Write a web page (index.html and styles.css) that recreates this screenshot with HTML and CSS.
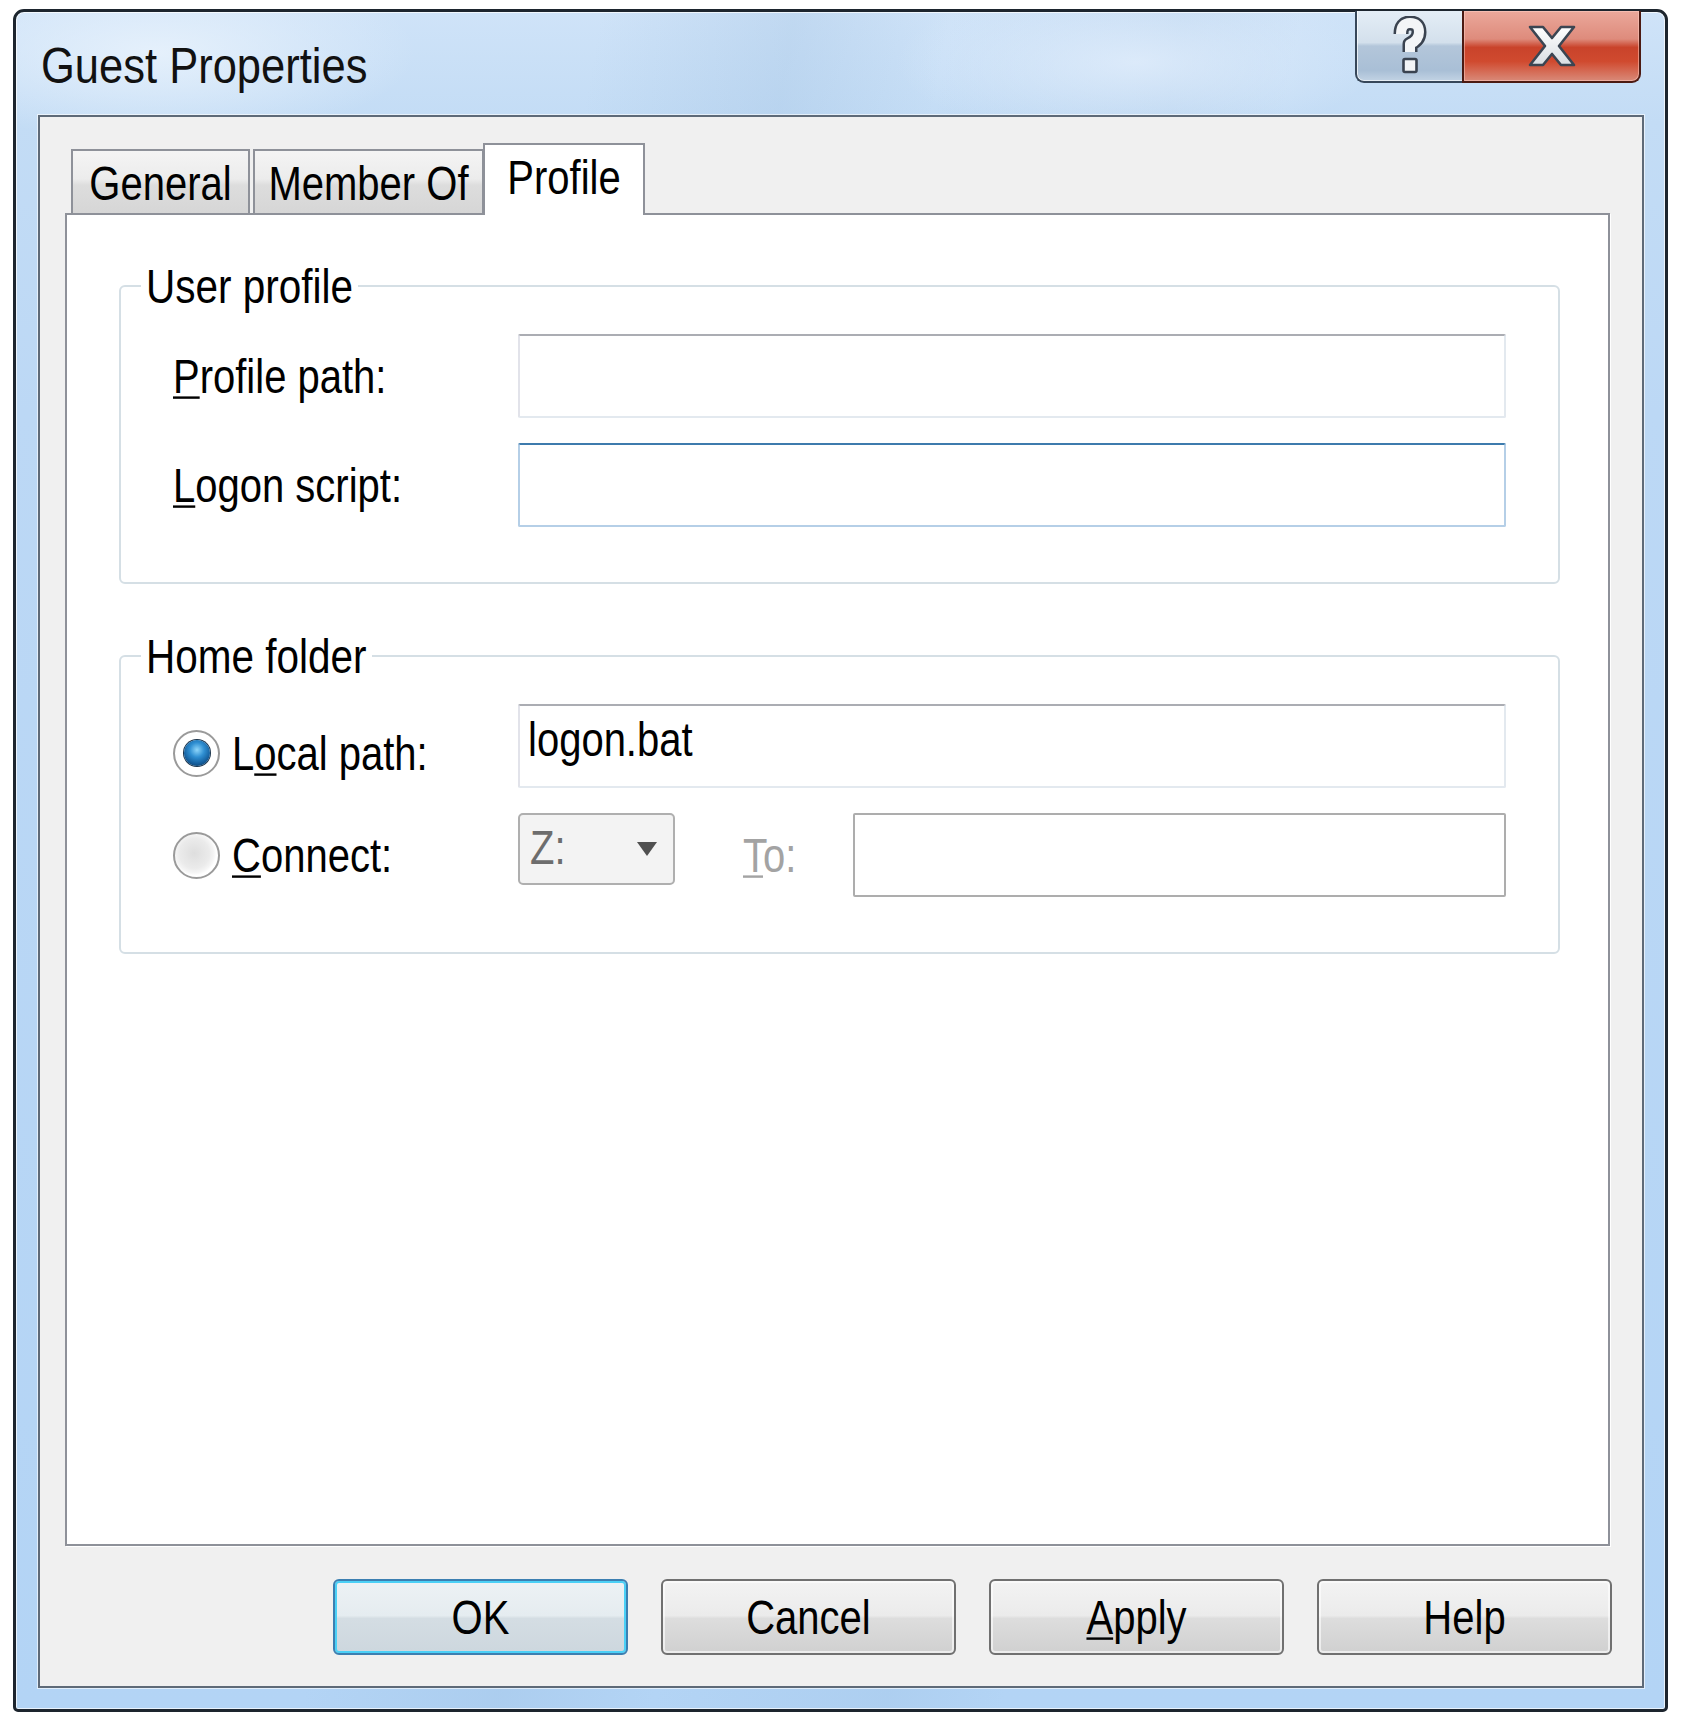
FILE: index.html
```html
<!DOCTYPE html>
<html lang="en">
<head>
<meta charset="utf-8">
<title>Guest Properties</title>
<link rel="stylesheet" href="styles.css">
</head>
<body>
<div class="window">
  <div class="titlebar">
    <div class="title"><span class="tx tx-title">Guest Properties</span></div>
    <div class="caption-btns">
      <div class="cbtn help">
        <svg width="36" height="60" viewBox="0 0 36 60">
          <path d="M9 18 Q9 7 18 7 Q27 7 27 16 Q27 24 18 28 V36" fill="none" stroke="#3a4350" stroke-width="15" stroke-linejoin="round" stroke-linecap="butt"/>
          <path d="M9 18 Q9 7 18 7 Q27 7 27 16 Q27 24 18 28 V36" fill="none" stroke="#f3f5f7" stroke-width="10" stroke-linejoin="round" stroke-linecap="butt"/>
          <rect x="11.5" y="43" width="13" height="13" rx="1.5" fill="#f3f5f7" stroke="#3a4350" stroke-width="2.6"/>
        </svg>
      </div>
      <div class="cbtn close">
        <svg width="48" height="42" viewBox="0 0 48 42">
          <defs>
            <linearGradient id="xg" x1="0" y1="0" x2="0" y2="1">
              <stop offset="0" stop-color="#ffffff"/>
              <stop offset="1" stop-color="#d8dde2"/>
            </linearGradient>
          </defs>
          <polygon points="2,2 15,2 24,13 33,2 46,2 31,21 46,40 33,40 24,29 15,40 2,40 17,21" fill="url(#xg)" stroke="#3b4552" stroke-width="2.6" stroke-linejoin="round"/>
        </svg>
      </div>
    </div>
  </div>

  <div class="client">
    <div class="tabs">
      <div class="tab tab-general"><span class="tx">General</span></div>
      <div class="tab tab-member"><span class="tx">Member Of</span></div>
      <div class="tab tab-profile active"><span class="tx">Profile</span></div>
    </div>

    <div class="panel">
      <fieldset class="group">
        <legend><span class="tx">User profile</span></legend>
        <div class="group-body">
          <div class="row">
            <div class="label"><span class="tx"><u>P</u>rofile path:</span></div>
            <div class="input"></div>
          </div>
          <div class="row">
            <div class="label"><span class="tx"><u>L</u>ogon script:</span></div>
            <div class="input focus"></div>
          </div>
        </div>
      </fieldset>

      <fieldset class="group group-home">
        <legend><span class="tx">Home folder</span></legend>
        <div class="group-body">
          <div class="row">
            <div class="label radio-label local">
              <span class="radio checked"></span>
              <span class="tx">L<u>o</u>cal path:</span>
            </div>
            <div class="input value"><span class="tx">logon.bat</span></div>
          </div>
          <div class="row row-connect">
            <div class="label radio-label">
              <span class="radio"></span>
              <span class="tx"><u>C</u>onnect:</span>
            </div>
            <div class="combo">
              <span class="combo-text tx">Z:</span>
              <span class="combo-arrow"></span>
            </div>
            <div class="to-label"><span class="tx"><u>T</u>o:</span></div>
            <div class="input to-input"></div>
          </div>
        </div>
      </fieldset>
    </div>

    <div class="buttons">
      <div class="btn default"><span class="tx">OK</span></div>
      <div class="btn"><span class="tx">Cancel</span></div>
      <div class="btn"><span class="tx"><u>A</u>pply</span></div>
      <div class="btn"><span class="tx">Help</span></div>
    </div>
  </div>
</div>
</body>
</html>
```

FILE: styles.css
```css
* {
  box-sizing: border-box;
}

html, body {
  margin: 0;
  padding: 0;
  background: #ffffff;
}

body {
  width: 1682px;
  height: 1722px;
  font-family: "Liberation Sans", Arial, sans-serif;
  font-size: 40px;
  color: #000;
  padding: 9px 0 0 13px;
}

/* the reference text is tall and narrow: stretch glyphs vertically */
.tx {
  display: inline-block;
  transform: scaleY(1.2);
  white-space: nowrap;
}

.tx-title {
  transform: scaleY(1.13);
}

.window {
  width: 1655px;
  height: 1703px;
  border: 3px solid #1d252e;
  border-radius: 11px 11px 5px 5px;
  padding: 0 21px 21px 22px;
  display: flex;
  flex-direction: column;
  background:
    radial-gradient(ellipse 260px 90px at 140px 40px, rgba(232, 242, 252, 0.9), rgba(232, 242, 252, 0) 100%),
    radial-gradient(ellipse 240px 80px at 1120px 50px, rgba(226, 238, 252, 0.8), rgba(226, 238, 252, 0) 100%),
    linear-gradient(100deg, rgba(255,255,255,0) 30%, rgba(150, 185, 220, 0.25) 40%, rgba(255,255,255,0) 48%, rgba(150, 185, 220, 0.2) 60%, rgba(255,255,255,0) 66%),
    linear-gradient(180deg, #cfe3f8 0px, #c3dcf5 110px, #bcd8f5 400px, #b3d4f5 100%);
  box-shadow: inset 0 0 0 1px rgba(255, 255, 255, 0.7);
}

.titlebar {
  height: 103px;
  display: flex;
  justify-content: space-between;
  align-items: flex-start;
  flex: none;
}

.title {
  margin-top: 26px;
  padding-left: 3px;
  font-size: 43.5px;
  line-height: 56px;
  color: #111;
}

.caption-btns {
  display: flex;
  margin-right: 3px;
  margin-top: -1px;
}

.cbtn {
  height: 72px;
  display: flex;
  align-items: center;
  justify-content: center;
  border: 2px solid #37475a;
  border-top: none;
}

.cbtn.help {
  width: 107px;
  border-right: none;
  border-radius: 0 0 0 9px;
  background: linear-gradient(180deg, #e4edf6 0%, #d3e0ec 45%, #b3c6da 50%, #a9bfd6 85%, #c2d3e4 100%);
  box-shadow: inset 1px 0 0 rgba(255,255,255,0.7), inset 0 -1px 0 rgba(255,255,255,0.6);
}

.cbtn.close {
  width: 179px;
  border-color: #4c1a12;
  border-radius: 0 0 9px 0;
  background: linear-gradient(180deg, #eba89b 0%, #de8b7c 40%, #c9432b 52%, #d04a2f 72%, #d98a79 100%);
  box-shadow: inset 0 0 0 1px rgba(255, 210, 200, 0.5);
}

.client {
  flex: 1;
  border: 2px solid #5e6a78;
  background: #f0f0f0;
  padding-top: 26px;
  display: flex;
  flex-direction: column;
  box-shadow: 0 0 0 1px rgba(255,255,255,0.6);
}

.tabs {
  display: flex;
  align-items: flex-end;
  height: 72px;
  margin-left: 31px;
  margin-bottom: -2px;
  position: relative;
  z-index: 1;
  flex: none;
}

.tab {
  height: 64px;
  margin-bottom: 2px;
  border: 2px solid #8e9199;
  border-bottom: none;
  display: flex;
  align-items: center;
  justify-content: center;
  line-height: 1;
  background: linear-gradient(180deg, #f4f4f4 0%, #ececec 45%, #dddddd 55%, #d6d6d6 100%);
  padding-top: 2px;
}

.tab-general {
  width: 179px;
  margin-right: 3px;
}

.tab-member {
  width: 231px;
}

.tab.active {
  width: 162px;
  height: 72px;
  margin-bottom: 0;
  margin-left: -1px;
  background: #ffffff;
  padding-top: 0;
  padding-bottom: 6px;
}

.panel {
  height: 1333px;
  margin: 0 32px 0 25px;
  border: 2px solid #8e9199;
  background: #ffffff;
  padding-top: 43px;
  flex: none;
  display: flex;
  flex-direction: column;
  box-shadow: 1px 1px 0 #ffffff;
}

.group {
  margin: 0 48px 0 52px;
  padding: 0;
  border: 2px solid #d5dfe5;
  border-radius: 6px;
  min-width: 0;
}

.group-home {
  margin-top: 44px;
}

.group legend {
  margin-left: 20px;
  padding: 0 5px;
  line-height: 56px;
  font-size: 40.5px;
}

.group-body {
  padding: 20px 52px 55px 52px;
  display: flex;
  flex-direction: column;
  gap: 25px;
}

.row {
  display: flex;
  align-items: center;
  height: 84px;
}

.label {
  width: 345px;
  flex: none;
  line-height: 56px;
  white-space: nowrap;
}

u {
  text-decoration-thickness: 2px;
  text-underline-offset: 3px;
}

.input {
  flex: 1;
  height: 84px;
  border: 2px solid;
  border-color: #abadb3 #e3e9ef #e3e9ef #e2e3ea;
  border-radius: 2px;
  background: #ffffff;
}

.input.focus {
  border-color: #3d7bad #b5cfe7 #b5cfe7 #b5cfe7;
}

.input.value {
  padding: 5px 0 0 8px;
  line-height: 56px;
}

.radio-label {
  display: flex;
  align-items: center;
  gap: 12px;
}

.radio-label.local {
  margin-top: 14px;
}

.radio {
  width: 47px;
  height: 47px;
  border-radius: 50%;
  flex: none;
  border: 2px solid #9a9a9a;
  background:
    radial-gradient(circle at 45% 45%, #dedede 0, #ebebeb 45%, #f5f5f5 58%, #ffffff 66%, #ffffff 72%, #b8b8b8 80%, #dadada 100%);
  display: flex;
  align-items: center;
  justify-content: center;
}

.radio.checked {
  background:
    radial-gradient(circle at 50% 50%, #ffffff 0, #ffffff 70%, #b8b8b8 80%, #dadada 100%);
}

.radio.checked::after {
  content: "";
  width: 26px;
  height: 26px;
  border-radius: 50%;
  background: radial-gradient(circle at 50% 38%, #8fd6fa 0, #2f8fd2 35%, #15609f 65%, #0a2a48 100%);
  box-shadow: 0 0 0 1px #18324a;
}

.combo {
  align-self: flex-start;
  width: 157px;
  height: 72px;
  flex: none;
  border: 2px solid #afafaf;
  border-radius: 5px;
  background: #f3f3f3;
  display: flex;
  align-items: center;
  justify-content: space-between;
  padding: 0 16px 4px 10px;
}

.combo-text {
  color: #6d6d6d;
  line-height: 1;
}

.combo-arrow {
  width: 0;
  height: 0;
  border-left: 10px solid transparent;
  border-right: 10px solid transparent;
  border-top: 14px solid #505050;
  margin-top: 4px;
}

.to-label {
  color: #a3a3a3;
  margin-left: 68px;
  width: 110px;
  flex: none;
  line-height: 56px;
}

.input.to-input {
  border-color: #adadad;
  height: 84px;
}

.buttons {
  display: flex;
  justify-content: flex-end;
  gap: 33px;
  margin-top: 33px;
  padding-right: 30px;
  flex: none;
}

.btn {
  width: 295px;
  height: 76px;
  border: 2px solid #707070;
  border-radius: 6px;
  background: linear-gradient(180deg, #f3f3f3 0%, #ebebeb 48%, #dddddd 52%, #d0d0d0 100%);
  box-shadow: inset 0 0 0 2px rgba(255,255,255,0.6);
  display: flex;
  align-items: center;
  justify-content: center;
  line-height: 1;
}

.btn.default {
  border-color: #3c7fb1;
  background: linear-gradient(180deg, #edf2f5 0%, #e5ecf0 48%, #d4dde3 52%, #cdd7de 100%);
  box-shadow: inset 0 0 0 2px #4bd0f6;
}
```
